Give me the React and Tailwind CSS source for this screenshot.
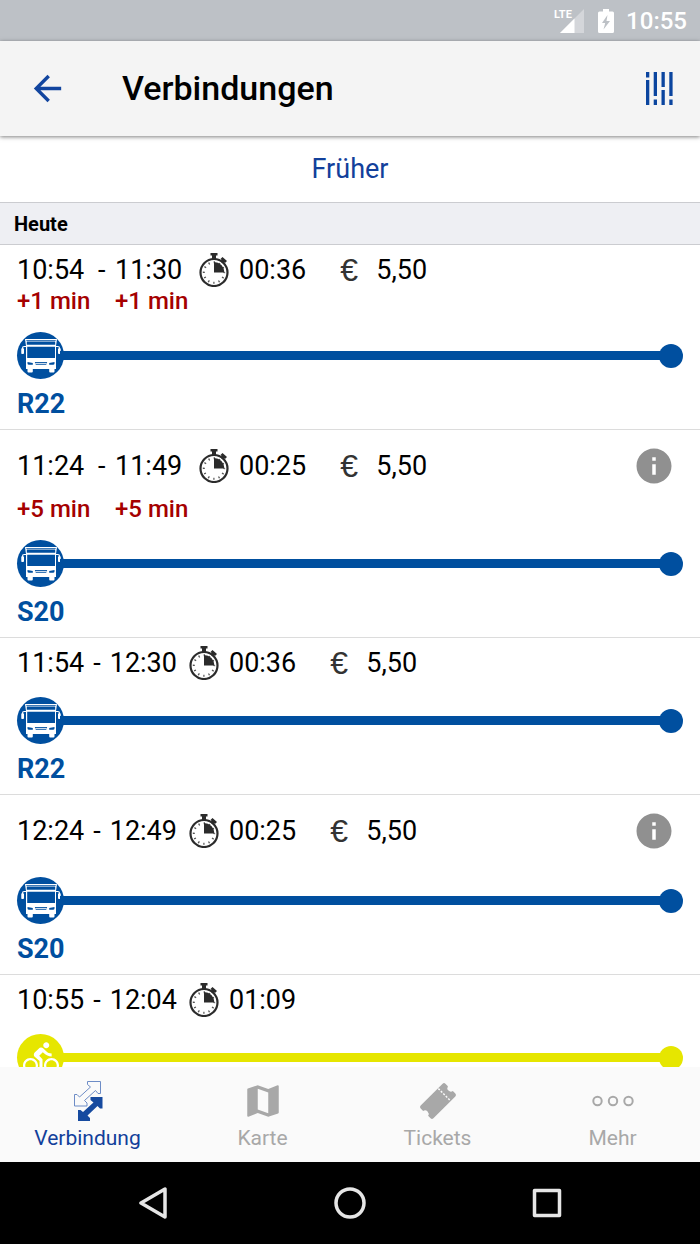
import React, { useState } from 'react';
import { MdArrowBack, MdDirectionsBike, MdInfo, MdMap } from 'react-icons/md';

const connections = [
    { id: 1, from: '10:54', to: '11:30', delay: ['+1 min', '+1 min'], duration: '00:36', price: '5,50', line: 'R22', type: 'bus' },
    { id: 2, from: '11:24', to: '11:49', delay: ['+5 min', '+5 min'], duration: '00:25', price: '5,50', line: 'S20', type: 'bus', info: true },
    { id: 3, from: '11:54', to: '12:30', duration: '00:36', price: '5,50', line: 'R22', type: 'bus' },
    { id: 4, from: '12:24', to: '12:49', duration: '00:25', price: '5,50', line: 'S20', type: 'bus', info: true },
    { id: 5, from: '10:55', to: '12:04', duration: '01:09', type: 'bike' },
];

const Stopwatch = () => (
    <svg viewBox="0 0 30 34" className="w-[30px] h-[34px] shrink-0" fill="none" stroke="#2b2b2b">
        <path d="M11.5 0h7v2.500h-1.500v3.500h-4V2.500h-1.500z" fill="#2b2b2b" stroke="none" />
        <path d="M22.500 5l4.500 4M22.500 9.500l2.500-3" strokeWidth="3" />
        <circle cx="15" cy="19.5" r="13.5" strokeWidth="2.200" />
        <circle cx="15" cy="19.5" r="10.2" strokeWidth="2" strokeDasharray="1.300 4.041" strokeDashoffset="0.650" stroke="#555" />
        <path d="M15 19.5V9a10.5 10.5 0 0 1 10.5 10.5z" fill="#2b2b2b" stroke="none" />
    </svg>
);

const BusIcon = () => (
    <svg viewBox="0 0 47 47" className="w-[47px] h-[47px]">
        <path d="M8 7h32l-1 7v23h-1.500v2.500q0 1-1 1h-3.300q-1 0-1-1V37H15.800v2.500q0 1-1 1h-3.300q-1 0-1-1V37H9V14z" fill="#fff" />
        <path d="M9.300 8h29.400v.8H9.300zM9.800 9.500h28.400v3.200H9.800zM10.200 14.700h27.800v11.300H10.200zM10.500 30l5.300 1v1.700h-3.800q-1.500 0-1.500-1.200zM37.500 30l-5.300 1v1.700h3.800q1.500 0 1.500-1.200zM17.800 30h12.400l-1 2.800h-10.400z" fill="#004f9f" />
        <path d="M18.300 31.400h11.400" stroke="#fff" strokeWidth="0.900" />
        <path d="M9 14.500H7.200q-1.700 0-1.700 1.700V22M39 14.500h1.800q1.700 0 1.700 1.700V22" fill="none" stroke="#fff" strokeWidth="1.200" />
        <path d="M4.300 16.500h2.700v5.300H4.300zM41 16.500h2.700v5.300H41z" fill="#fff" />
    </svg>
);

const ConnectionIcon = () => (
    <svg viewBox="0 0 30 42" className="w-[32px] h-[42px]">
        <path d="M14.500 1.500H27.500V13.500H25L22.500 10.500L11.500 20.500L14 23V26H1.500V14.500H4L6.500 17L17.500 7L14.500 4.500z" fill="none" stroke="#6d8cc6" />
        <path d="M17.500 17H29.500V28.500H27L24.500 26L14.500 35.500L17 38V41H5V30H7.500L10 32L20.500 22.500L17.500 20z" fill="#164a9f" />
    </svg>
);

const TicketIcon = () => (
    <svg viewBox="0 0 38 38" className="w-[38px] h-[38px]">
        <g transform="rotate(-45 19 19)">
            <path d="M3.500 10h31q2 0 2 2v3.500a3.600 3.600 0 0 0 0 7V26q0 2-2 2h-31q-2 0-2-2v-3.500a3.600 3.600 0 0 0 0-7V12q0-2 2-2z" fill="#a8a8a8" />
            <path d="M28 10.500v17" stroke="#fafafa" strokeWidth="1.500" strokeDasharray="2 1.500" />
        </g>
    </svg>
);

const MoreIcon = () => (
    <svg viewBox="0 0 42 12" className="w-[42px] h-3" fill="none" stroke="#a8a8a8" strokeWidth="2">
        <circle cx="5.500" cy="6" r="4.200" />
        <circle cx="21" cy="6" r="4.200" />
        <circle cx="36.500" cy="6" r="4.200" />
    </svg>
);

const tabs = [
    { label: 'Verbindung', icon: <ConnectionIcon /> },
    { label: 'Karte', icon: <MdMap className="w-[42px] h-[42px] text-[#a8a8a8]" /> },
    { label: 'Tickets', icon: <TicketIcon /> },
    { label: 'Mehr', icon: <MoreIcon /> },
];

const StatusBar = () => (
    <div className="h-[41px] shrink-0 bg-[#bdc1c6] flex items-center justify-end pr-[13px] text-white">
        <div className="relative mr-3.5">
            <svg viewBox="0 0 24 24" className="w-6 h-6">
                <path d="M24 0v24H0z" fill="#fff" opacity="0.350" />
                <path d="M14.500 9.500V24H0z" fill="#fff" />
            </svg>
            <span className="absolute -left-1.5 top-0 text-[11px] leading-3 font-bold font-['Liberation_Sans_Narrow',Roboto,sans-serif]">LTE</span>
        </div>
        <svg viewBox="0 0 16 24" className="w-4 h-6 mr-3">
            <path fillRule="evenodd" d="M5 0h6v2.500h3.500q1.500 0 1.500 1.500v18.500q0 1.500-1.500 1.500h-13Q0 24 0 22.500V4Q0 2.500 1.500 2.500H5zM9.500 6L4 14h3.200L5.500 20.500 12 12H8.500z" fill="#fff" />
        </svg>
        <span className="text-2xl font-medium">10:55</span>
    </div>
);

const Connection = ({ c }) => {
    const bike = c.type === 'bike';
    return (
        <li className={`px-[17px] pb-[9px] border-b border-[#dcdcdc] ${c.info ? 'pt-[19px]' : 'pt-2'}`}>
            <div className={c.info ? 'pb-3' : ''}>
                <div className="flex items-center h-[34px] text-[27px]">
                    {c.delay ? (
                        <>
                            <span className="w-[81px]">{c.from}</span>
                            <span className="w-[17px]">-</span>
                            <span className="w-[72px]">{c.to}</span>
                        </>
                    ) : (
                        <span className="flex gap-[9px]">
                            <span>{c.from}</span>
                            <span>-</span>
                            <span>{c.to}</span>
                        </span>
                    )}
                    <span className="ml-3"><Stopwatch /></span>
                    <span className="ml-2.5">{c.duration}</span>
                    {c.price && (
                        <>
                            <span className="ml-[34px] w-9 text-[32px] text-[#333] font-['Liberation_Sans',sans-serif]">€</span>
                            <span>{c.price}</span>
                        </>
                    )}
                    {c.info && (
                        <button type="button" aria-label="Information" className="ml-auto mr-2">
                            <MdInfo className="w-[42px] h-[42px] text-[#909090]" />
                        </button>
                    )}
                </div>
            </div>

            {c.delay && (
                <div className="flex h-7 items-center text-2xl font-medium text-[#a50000]">
                    <span className="w-[98px]">{c.delay[0]}</span>
                    <span>{c.delay[1]}</span>
                </div>
            )}

            <div className="mt-[17px] flex items-center">
                <div className={`w-[47px] h-[47px] rounded-full flex items-center justify-center ${bike ? 'bg-[#e6e600]' : 'bg-[#004f9f]'}`}>
                    {bike ? <MdDirectionsBike className="w-9 h-9 text-white" /> : <BusIcon />}
                </div>
                <div className={`flex-1 h-[9px] -mx-1 ${bike ? 'bg-[#e6e600]' : 'bg-[#004f9f]'}`} />
                <div className={`w-6 h-6 rounded-full ${bike ? 'bg-[#e6e600]' : 'bg-[#004f9f]'}`} />
            </div>
            {c.line && <p className="mt-[9px] text-[27px] leading-8 font-bold text-[#004f9f]">{c.line}</p>}
        </li>
    );
};

const App = () => {
    const [active, setActive] = useState('Verbindung');

    return (
        <div className="h-screen flex flex-col bg-white text-black font-[Roboto,sans-serif]">
            <StatusBar />

            <header className="relative z-10 h-[95px] shrink-0 flex items-center bg-[#f4f4f4] shadow-[0_1px_4px_rgba(0,0,0,0.5)]">
                <button type="button" aria-label="Zurück" className="ml-[27px] text-[#12459f]">
                    <MdArrowBack className="w-[41px] h-[41px]" />
                </button>
                <h1 className="ml-[54px] text-[34px] font-medium">Verbindungen</h1>
                <button type="button" aria-label="Filter" className="ml-auto mr-[27px]">
                    <svg viewBox="0 0 27 33" className="w-[27px] h-[33px]" fill="#0b459f">
                        <path d="M0 0h3.300v5.500H0zM0 8h3.300v25H0zM7.700 0h3.300v24H7.700zM7.700 27.500h3.300v5.500H7.700zM15.500 0h3.300v15h-3.300zM15.500 18h3.300v15h-3.300zM23.300 0h3.300v24h-3.300zM23.300 27.500h3.300v5.500h-3.300z" />
                    </svg>
                </button>
            </header>

            <main className="flex-1 min-h-0 overflow-y-auto [scrollbar-width:none]">
                <button type="button" className="w-full h-[66px] text-[27px] text-[#12409b]">Früher</button>
                <h2 className="h-[43px] flex items-center px-3.5 bg-[#eeeff3] border-y border-[#cbccd0] text-xl font-bold">Heute</h2>
                <ul>
                    {connections.map(c => <Connection key={c.id} c={c} />)}
                </ul>
            </main>

            <nav className="h-[95px] shrink-0 grid grid-cols-4 bg-[#fafafa]">
                {tabs.map(t => (
                    <button key={t.label} type="button" onClick={() => setActive(t.label)}
                        className={`flex flex-col items-center pt-[13px] text-[21px] leading-6 ${active === t.label ? 'text-[#12409b]' : 'text-[#a8a8a8]'}`}>
                        <span className="h-[42px] mb-1 flex items-center">{t.icon}</span>
                        {t.label}
                    </button>
                ))}
            </nav>

            <div className="h-[82px] shrink-0 grid grid-cols-3 px-[54px] bg-black">
                <button type="button" aria-label="Android Zurück" className="flex items-center justify-center">
                    <svg viewBox="0 0 32 32" className="w-8 h-8" fill="none" stroke="#e6e6e6" strokeWidth="3.500" strokeLinejoin="round">
                        <path d="M28 2v28L4 16z" />
                    </svg>
                </button>
                <button type="button" aria-label="Startseite" className="flex items-center justify-center">
                    <svg viewBox="0 0 32 32" className="w-8 h-8" fill="none" stroke="#e6e6e6" strokeWidth="3.500">
                        <circle cx="16" cy="16" r="14" />
                    </svg>
                </button>
                <button type="button" aria-label="Letzte Apps" className="flex items-center justify-center">
                    <svg viewBox="0 0 32 32" className="w-8 h-8" fill="none" stroke="#e6e6e6" strokeWidth="3.500" strokeLinejoin="round">
                        <path d="M3.500 3.500h25v25h-25z" />
                    </svg>
                </button>
            </div>
        </div>
    );
};

export default App;
